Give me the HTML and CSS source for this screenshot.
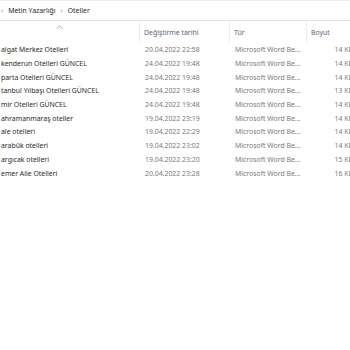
FILE: index.html
```html
<!DOCTYPE html>
<html lang="tr">
<head>
	<meta charset="UTF-8" />
	<title>Oteller</title>
	<link rel="stylesheet" href="styles.css">
</head>
<body>
	<!-- adres çubuğu -->
	<div class="crumbs">
		<span class="sep">›</span>
		<span>Metin Yazarlığı</span>
		<span class="sep">›</span>
		<span>Oteller</span>
	</div>

	<!-- dosya listesi -->
	<div class="list">
		<div class="head">
			<div class="cell name">
				<svg class="caret" width="7" height="4" viewBox="0 0 7 4"><path d="M0.5 3.5 L3.5 0.8 L6.5 3.5" fill="none" stroke="#9a9a9a" stroke-width="0.8"/></svg>
			</div>
			<div class="cell">Değiştirme tarihi</div>
			<div class="cell">Tür</div>
			<div class="cell">Boyut</div>
		</div>

		<div class="row"><div class="cell name">algat Merkez Otelleri</div><div class="cell">20.04.2022 22:58</div><div class="cell">Microsoft Word Be...</div><div class="cell size">14 KB</div></div>
		<div class="row"><div class="cell name">kenderun Otelleri GÜNCEL</div><div class="cell">24.04.2022 19:48</div><div class="cell">Microsoft Word Be...</div><div class="cell size">14 KB</div></div>
		<div class="row"><div class="cell name">parta Otelleri GÜNCEL</div><div class="cell">24.04.2022 19:48</div><div class="cell">Microsoft Word Be...</div><div class="cell size">14 KB</div></div>
		<div class="row"><div class="cell name">tanbul Yılbaşı Otelleri GÜNCEL</div><div class="cell">24.04.2022 19:48</div><div class="cell">Microsoft Word Be...</div><div class="cell size">13 KB</div></div>
		<div class="row"><div class="cell name">mir Otelleri GÜNCEL</div><div class="cell">24.04.2022 19:48</div><div class="cell">Microsoft Word Be...</div><div class="cell size">14 KB</div></div>
		<div class="row"><div class="cell name">ahramanmaraş oteller</div><div class="cell">19.04.2022 23:19</div><div class="cell">Microsoft Word Be...</div><div class="cell size">14 KB</div></div>
		<div class="row"><div class="cell name">ale otelleri</div><div class="cell">19.04.2022 22:29</div><div class="cell">Microsoft Word Be...</div><div class="cell size">14 KB</div></div>
		<div class="row"><div class="cell name">arabük otelleri</div><div class="cell">19.04.2022 23:02</div><div class="cell">Microsoft Word Be...</div><div class="cell size">14 KB</div></div>
		<div class="row"><div class="cell name">argıcak otelleri</div><div class="cell">19.04.2022 23:20</div><div class="cell">Microsoft Word Be...</div><div class="cell size">15 KB</div></div>
		<div class="row"><div class="cell name">emer Aile Otelleri</div><div class="cell">20.04.2022 23:28</div><div class="cell">Microsoft Word Be...</div><div class="cell size">16 KB</div></div>
	</div>
</body>
</html>
```

FILE: styles.css
```css
*{
	margin:0;
	padding:0;
	box-sizing:border-box;
}
html,body{
	width:350px;
	height:350px;
	overflow:hidden;
	background:#fff;
}
body{
	font-family:"Noto Sans","Open Sans",sans-serif;
	font-size:6.9px;
	color:#2a2a2a;
}
.crumbs{
	display:flex;
	align-items:center;
	gap:5px;
	height:21px;
	padding-left:1px;
	border-top:1px solid #f0f0f0;
	border-bottom:1px solid #e6e6e6;
	color:#2a2a2a;
	font-size:6.9px;
}
.crumbs .sep{
	color:#888;
}
.list{
	width:362px;
}
.head,
.row{
	display:grid;
	grid-template-columns:139px 90px 77px 1fr;
}
.head{
	height:22px;
	align-items:stretch;
	color:#55667c;
}
.head .cell{
	display:flex;
	align-items:center;
	border-left:1px solid #ececec;
	padding-left:4px;
}
.head .cell.name{
	border-left:0;
	align-items:flex-start;
	padding-left:56px;
	padding-top:4px;
}
.row{
	height:13.7px;
	align-items:center;
	color:#7a7a7a;
}
.row .cell{
	padding-left:6px;
	white-space:nowrap;
	overflow:hidden;
}
.row .cell.name{
	padding-left:1px;
	color:#2a2a2a;
}
.row .cell.size{
	text-align:right;
	padding-right:9px;
}
```
